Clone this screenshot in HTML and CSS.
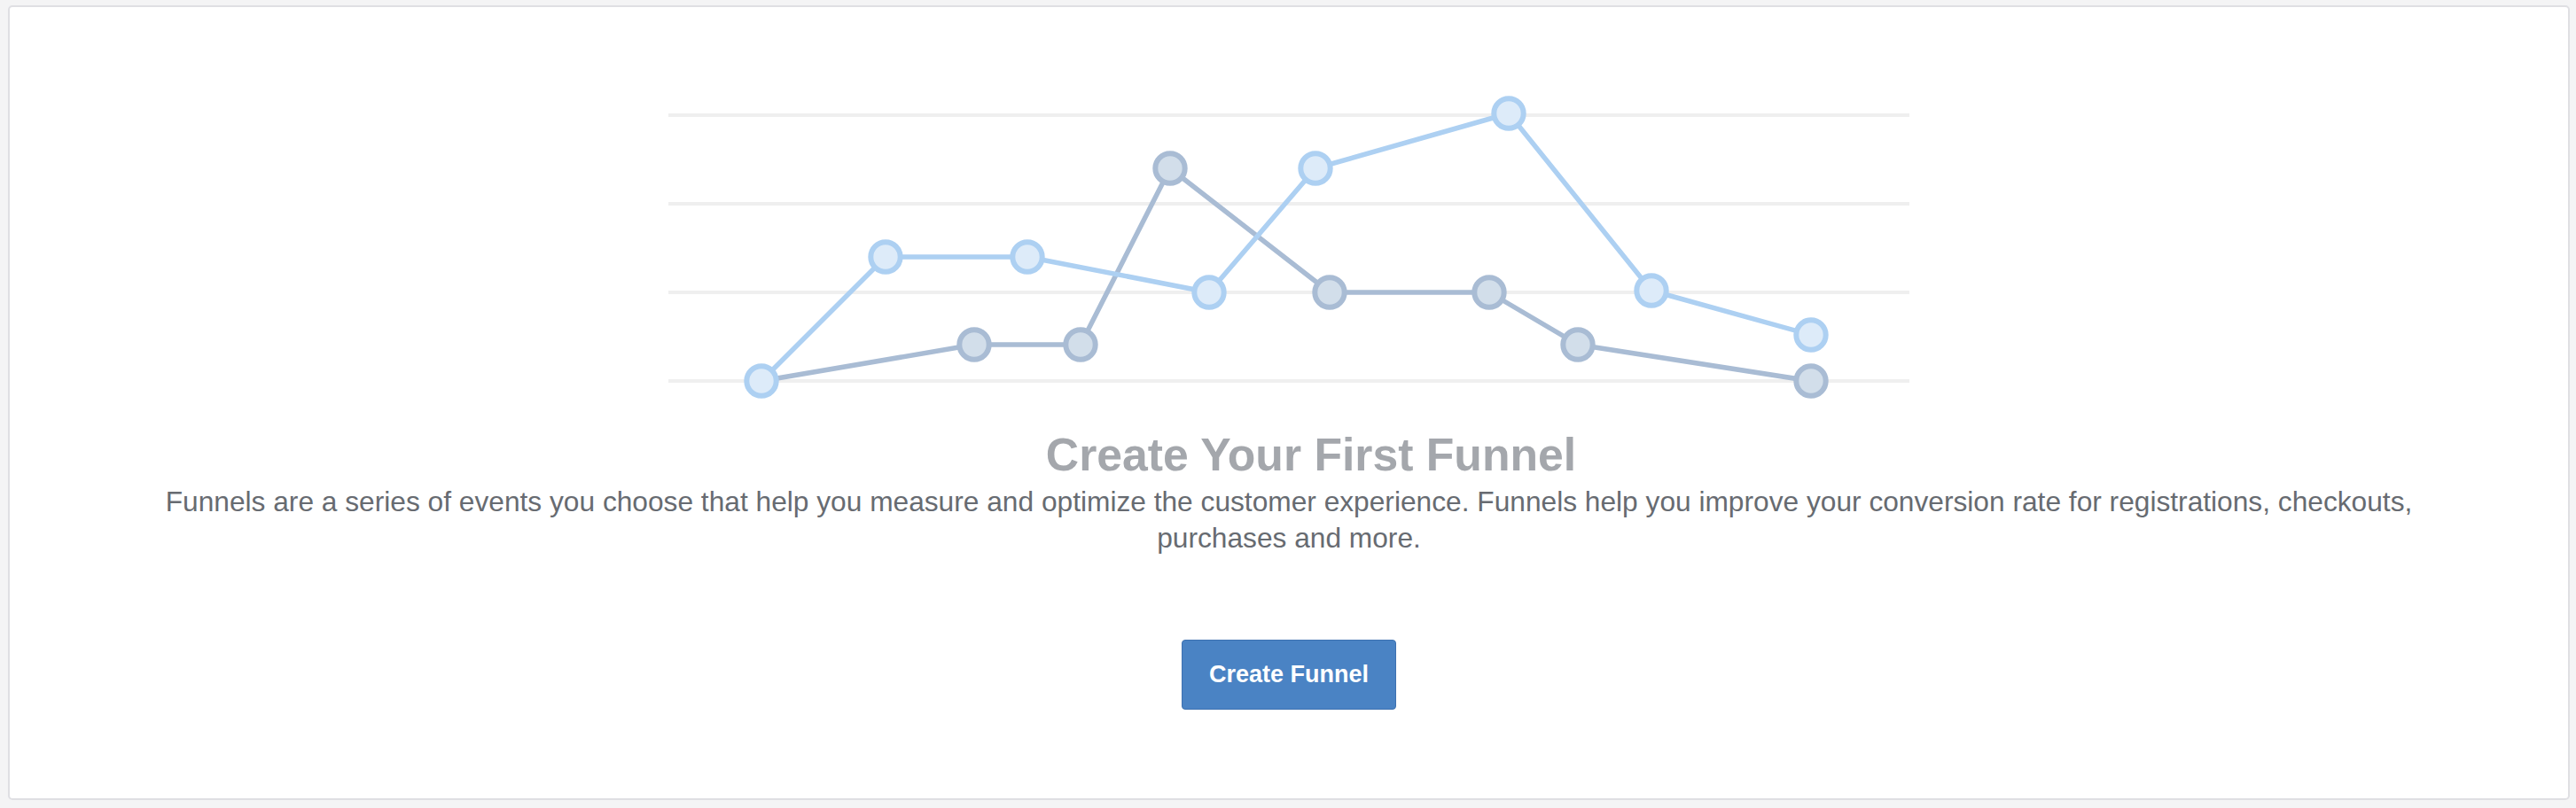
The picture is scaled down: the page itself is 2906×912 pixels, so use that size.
FILE: index.html
```html
<!DOCTYPE html>
<html lang="en">
<head>
<meta charset="utf-8">
<title>Funnels</title>
<link rel="stylesheet" href="styles.css">
</head>
<body>
<div class="card">
  <svg class="chart" width="1400" height="360" viewBox="0 0 1400 360" xmlns="http://www.w3.org/2000/svg">
    <g class="grid">
      <line x1="0" y1="30" x2="1400" y2="30"/>
      <line x1="0" y1="130" x2="1400" y2="130"/>
      <line x1="0" y1="230" x2="1400" y2="230"/>
      <line x1="0" y1="330" x2="1400" y2="330"/>
    </g>
    <polyline class="line-dark" points="105,330 345,289 465,289 566,90 746,230 926,230 1026,289 1289,330"/>
    <polyline class="line-light" points="105,330 245,190 405,190 610,230 730,90 948,28 1109,228 1289,278"/>
    <g class="node-dark">
      <circle cx="345" cy="289" r="16.7"/>
      <circle cx="465" cy="289" r="16.7"/>
      <circle cx="566" cy="90" r="16.7"/>
      <circle cx="746" cy="230" r="16.7"/>
      <circle cx="926" cy="230" r="16.7"/>
      <circle cx="1026" cy="289" r="16.7"/>
      <circle cx="1289" cy="330" r="16.7"/>
    </g>
    <g class="node-light">
      <circle cx="105" cy="330" r="16.7"/>
      <circle cx="245" cy="190" r="16.7"/>
      <circle cx="405" cy="190" r="16.7"/>
      <circle cx="610" cy="230" r="16.7"/>
      <circle cx="730" cy="90" r="16.7"/>
      <circle cx="948" cy="28" r="16.7"/>
      <circle cx="1109" cy="228" r="16.7"/>
      <circle cx="1289" cy="278" r="16.7"/>
    </g>
  </svg>
  <h1 class="title">Create Your First Funnel</h1>
  <p class="desc">Funnels are a series of events you choose that help you measure and optimize the customer experience. Funnels help you improve your conversion rate for registrations, checkouts, purchases and more.</p>
  <button class="btn" type="button">Create Funnel</button>
</div>
</body>
</html>
```
FILE: styles.css
```css
html, body {
  margin: 0;
  padding: 0;
  background: #f4f4f5;
}
body {
  padding: 6px 7px 9px 9px;
  font-family: "Liberation Sans", Arial, Helvetica, sans-serif;
}
.card {
  box-sizing: border-box;
  width: 2890px;
  height: 897px;
  background: #ffffff;
  border: 2px solid #dfdfe3;
  border-radius: 5px;
  display: flex;
  flex-direction: column;
  align-items: center;
  padding-top: 92px;
}
.chart {
  display: block;
  flex: none;
  overflow: visible;
}
.grid line {
  stroke: #efefef;
  stroke-width: 4;
}
.line-dark {
  fill: none;
  stroke: #a9bcd4;
  stroke-width: 5.5;
  stroke-linejoin: round;
}
.line-light {
  fill: none;
  stroke: #add0f2;
  stroke-width: 5.5;
  stroke-linejoin: round;
}
.node-dark circle {
  fill: #d2deea;
  stroke: #a9bcd4;
  stroke-width: 6;
}
.node-light circle {
  fill: #ddebf9;
  stroke: #add0f2;
  stroke-width: 6;
}
.title {
  margin: 28px 0 0;
  padding-left: 50px;
  font-size: 51.7px;
  line-height: 50px;
  font-weight: bold;
  color: #a4a7ac;
  text-align: center;
}
.desc {
  box-sizing: border-box;
  width: 100%;
  margin: 8px 0 0;
  padding: 0 140px;
  font-size: 31.7px;
  line-height: 41px;
  color: #676b71;
  text-align: center;
}
.btn {
  margin-top: 94px;
  box-sizing: border-box;
  height: 79px;
  padding: 0 30px;
  background: #4a83c4;
  border: 1px solid #3d71b0;
  border-radius: 4px;
  color: #ffffff;
  font-family: "Liberation Sans", Arial, Helvetica, sans-serif;
  font-size: 27px;
  font-weight: bold;
  line-height: 31px;
}
```
